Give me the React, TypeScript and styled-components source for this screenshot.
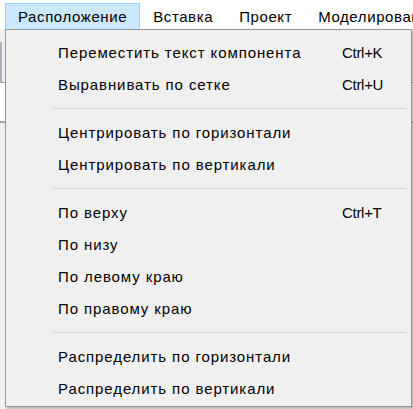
import { FC } from 'react'
import styled, { createGlobalStyle } from 'styled-components'

const GlobalStyle = createGlobalStyle`
  html, body {
    margin: 0;
    padding: 0;
    width: 413px;
    height: 409px;
    overflow: hidden;
    background: #f0f0f0;
  }
  body {
    font-family: "Liberation Sans", Arial, sans-serif;
    font-size: 15px;
    color: #000;
  }
`

type MenuEntry = { label: string; shortcut?: string } | 'separator'

const entries: MenuEntry[] = [
  { label: 'Переместить текст компонента', shortcut: 'Ctrl+K' },
  { label: 'Выравнивать по сетке', shortcut: 'Ctrl+U' },
  'separator',
  { label: 'Центрировать по горизонтали' },
  { label: 'Центрировать по вертикали' },
  'separator',
  { label: 'По верху', shortcut: 'Ctrl+T' },
  { label: 'По низу' },
  { label: 'По левому краю' },
  { label: 'По правому краю' },
  'separator',
  { label: 'Распределить по горизонтали' },
  { label: 'Распределить по вертикали' },
]

const topItems = ['Расположение', 'Вставка', 'Проект', 'Моделирование']

const Page = styled.div`
  position: relative;
  width: 413px;
  height: 409px;
  display: flex;
  flex-direction: column;
`

const MenuBar = styled.div`
  height: 29px;
  box-sizing: border-box;
  padding: 3px 0 0 5px;
  background: #fff;
  display: flex;
  white-space: nowrap;
  overflow: hidden;
  letter-spacing: 0.6px;
`

const TopItem = styled.div<{ $open?: boolean }>`
  height: 26px;
  box-sizing: border-box;
  padding: 0 12px;
  display: flex;
  align-items: center;
  flex-shrink: 0;
  border: 1px solid ${p => (p.$open ? '#99d1ff' : 'transparent')};
  border-bottom: none;
  background: ${p => (p.$open ? '#cce8ff' : 'transparent')};
`

const Toolbar = styled.div`
  height: 54px;
  box-sizing: border-box;
  padding-top: 13px;
  background: #f0f0f0;
  border-bottom: 1px solid #a0a0a0;
  display: flex;
`

const ToolButtonEdge = styled.div`
  width: 2px;
  height: 40px;
  background: #a9b2bd;
`

const Sheet = styled.div`
  height: 38px;
  background: #fff;
  border-bottom: 2px solid #a0a8b3;
`

const Workspace = styled.div`
  flex: 1;
  background: #f0f0f0;
`

const Dropdown = styled.div`
  position: absolute;
  top: 29px;
  left: 5px;
  width: 407px;
  box-sizing: border-box;
  padding: 6px 0 2px;
  background: #f0f0f0;
  border: 1px solid #979797;
  box-shadow: 2px 2px 2px rgba(0, 0, 0, 0.25);
`

const Item = styled.div`
  height: 32px;
  display: flex;
  align-items: center;
  padding-left: 52px;
  white-space: nowrap;
`

const Label = styled.span`
  flex: 1;
  letter-spacing: 0.9px;
`

const Shortcut = styled.span`
  width: 69px;
  letter-spacing: -0.3px;
`

const Separator = styled.div`
  height: 16px;
  display: flex;
  align-items: center;
  margin: 0 5px 0 46px;

  &::after {
    content: '';
    flex: 1;
    height: 1px;
    background: #d7d7d7;
  }
`

const App: FC = () => {
  return (
    <Page>
      <GlobalStyle />
      <MenuBar>
        {topItems.map((t, i) => (
          <TopItem key={t} $open={i === 0}>
            {t}
          </TopItem>
        ))}
      </MenuBar>
      <Toolbar>
        <ToolButtonEdge />
      </Toolbar>
      <Sheet />
      <Workspace />
      <Dropdown>
        {entries.map((e, i) =>
          e === 'separator' ? (
            <Separator key={i} />
          ) : (
            <Item key={i}>
              <Label>{e.label}</Label>
              <Shortcut>{e.shortcut}</Shortcut>
            </Item>
          )
        )}
      </Dropdown>
    </Page>
  )
}

export default App
